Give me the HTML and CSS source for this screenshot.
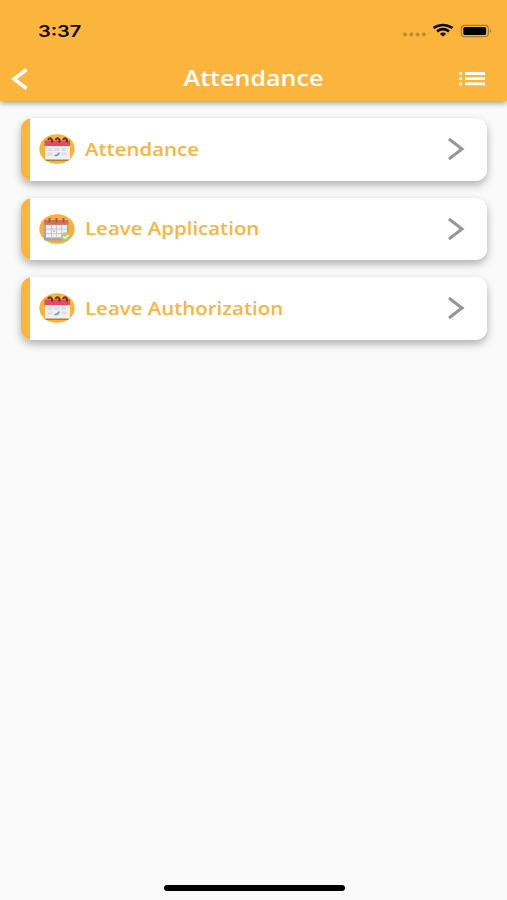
FILE: index.html
```html
<!DOCTYPE html>
<html lang="en">
<head>
    <meta charset="UTF-8">
    <meta name="viewport" content="width=device-width, initial-scale=1.0">
    <title>Attendance</title>
    <link rel="stylesheet" href="styles.css">
</head>
<body>
    <svg width="0" height="0" class="symbols">
        <symbol id="calendar" viewBox="0 0 36 30">
            <ellipse cx="18" cy="15" rx="17.7" ry="14.8" fill="#fbb43a"/>
            <path d="M5 24.500h26.500l-2.500 2.500H7z" fill="#a9822f"/>
            <path d="M6 11h25v14.500H6z" fill="#f3eef0"/>
            <path d="M5.500 6.500H31V12H5.500z" fill="#ea4860"/>
            <path d="M8.500 14h5v3h-5zM15 14h5.500v3H15zM22.500 14h5v3h-5zM8.500 18.500h5v3h-5zM22.500 18.500h5v3h-5z" fill="#e2dcdf"/>
            <path d="M15.500 21.500q4 .5 4.500-3" fill="none" stroke="#3ba3dc" stroke-width="1.600"/>
            <path d="M9 6q2-3.500 4 0v2.500M16.500 6q2-3.500 4 0v2.500M24 6q2-3.500 4 0v2.500" fill="none" stroke="#68302c" stroke-width="2.200"/>
        </symbol>
        <symbol id="calendar-check" viewBox="0 0 36 30">
            <ellipse cx="18" cy="15" rx="17.7" ry="14.8" fill="#fbb034"/>
            <path d="M5 8h24.500v18.500H5z" fill="#a3a5a8"/>
            <path d="M7 11h21v12.500H7z" fill="#f1eff4"/>
            <path d="M5 6h24.500v4.500H5z" fill="#e66a4b"/>
            <path d="M7 15h21M7 19.500h21M12.500 11v12M17.500 11v12M22.500 11v12" stroke="#c4c2ca" stroke-width=".9"/>
            <path d="M14 17.200h2" stroke="#e39a98" stroke-width="1.300"/>
            <path d="M10.500 4v4.500M17.500 4v4.500M24.500 4v4.500" stroke="#806761" stroke-width="2"/>
            <ellipse cx="26.500" cy="22.500" rx="4.800" ry="4.200" fill="#b3cf78"/>
            <path d="M24 22.500l2 1.500 3.500-3" fill="none" stroke="#f2f8e5" stroke-width="1.300"/>
        </symbol>
        <symbol id="arrow" viewBox="0 0 18 24">
            <path d="M2 2l13 10L2 22" fill="none" stroke="#969696" stroke-width="3"/>
        </symbol>
    </svg>

    <header class="header">
        <div class="status-bar">
            <span class="time">3:37</span>
            <svg class="status-icons" width="90" height="16" viewBox="0 0 90 16">
                <g fill="#bd8b36">
                    <circle cx="3" cy="12.500" r="1.900"/>
                    <circle cx="9.300" cy="12.500" r="1.900"/>
                    <circle cx="15.600" cy="12.500" r="1.900"/>
                    <circle cx="21.900" cy="12.500" r="1.900"/>
                </g>
                <path d="M31.500 5.900q9.500-5.800 19 0M35 9.300q6-4.200 12 0" fill="none" stroke="#0b0904" stroke-width="2.700"/>
                <path d="M37.800 11.700q3.200-2.200 6.400 0L41 14.600z" fill="#0b0904"/>
                <rect x="59.300" y="3.300" width="27" height="11.400" rx="3.200" fill="none" stroke="#a87b30" stroke-width="1.200"/>
                <rect x="61.300" y="5" width="22.800" height="8" rx="1.600" fill="#000"/>
                <path d="M87.800 7q3.200 2 0 4z" fill="#a87b30"/>
            </svg>
        </div>
        <div class="nav-bar">
            <svg class="back" width="28" height="24" viewBox="0 0 28 24">
                <path d="M15.500 2.500L3 12l12.500 9.500" fill="none" stroke="#fff" stroke-width="3.600"/>
            </svg>
            <h1 class="title">Attendance</h1>
            <svg class="menu" width="28" height="16" viewBox="0 0 28 16">
                <path d="M1.500 2.500H4M7 2.500h20M1.500 7.700H4M7 7.700h20M1.500 12.800H4M7 12.800h20" stroke="#fff" stroke-width="2.800"/>
            </svg>
        </div>
    </header>

    <main class="list">
        <div class="card">
            <svg class="icon"><use href="#calendar"/></svg>
            <span class="label">Attendance</span>
            <svg class="arrow"><use href="#arrow"/></svg>
        </div>
        <div class="card">
            <svg class="icon"><use href="#calendar-check"/></svg>
            <span class="label">Leave Application</span>
            <svg class="arrow"><use href="#arrow"/></svg>
        </div>
        <div class="card">
            <svg class="icon"><use href="#calendar"/></svg>
            <span class="label">Leave Authorization</span>
            <svg class="arrow"><use href="#arrow"/></svg>
        </div>
    </main>

    <div class="home-indicator"></div>
</body>
</html>
```

FILE: styles.css
```css
* {
    box-sizing: border-box;
}
body {
    margin: 0;
    height: 900px;
    display: flex;
    flex-direction: column;
    overflow: hidden;
    background-color: #fafafa;
    font-family: "Open Sans", "Noto Sans", sans-serif;
}
.symbols {
    position: absolute;
}
.header {
    height: 101px;
    flex-shrink: 0;
    background-color: #fbb43c;
    box-shadow: 0 2px 6px rgba(0, 0, 0, 0.4);
}
.status-bar {
    height: 56px;
    padding: 22px 15px 0 38px;
    display: flex;
    justify-content: space-between;
}
.time {
    font-family: Inter, sans-serif;
    font-size: 16px;
    font-weight: 600;
    line-height: 19px;
    color: #0b0904;
    transform: scaleX(1.25);
    transform-origin: left;
}
.nav-bar {
    height: 45px;
    padding: 0 21px 0 11px;
    display: grid;
    grid-template-columns: 28px 1fr 28px;
    align-items: center;
}
.title {
    margin: 0 0 1px 10px;
    font-size: 21px;
    font-weight: 600;
    line-height: 28px;
    text-align: center;
    color: #fff;
    transform: scaleX(1.195);
}
.list {
    flex: 1;
    padding: 17px 20px 0 21px;
    display: flex;
    flex-direction: column;
    gap: 17px;
}
.card {
    height: 62.5px;
    padding: 0 22px 0 18px;
    display: flex;
    align-items: center;
    border-radius: 12px / 11px;
    background: linear-gradient(to right, #fbb43c 9.5px, #fff 9.5px);
    box-shadow: 0 4px 9px rgba(0, 0, 0, 0.3);
}
.icon {
    width: 36px;
    height: 30px;
}
.label {
    margin: 0 0 1px 10px;
    font-size: 17.5px;
    font-weight: 600;
    color: #fbb43c;
    transform: scaleX(1.168);
    transform-origin: left;
}
.arrow {
    width: 18px;
    height: 24px;
    margin-left: auto;
}
.home-indicator {
    width: 181px;
    height: 6px;
    margin: 0 auto 9px 163.5px;
    border-radius: 3px;
    background-color: #000;
}
```
